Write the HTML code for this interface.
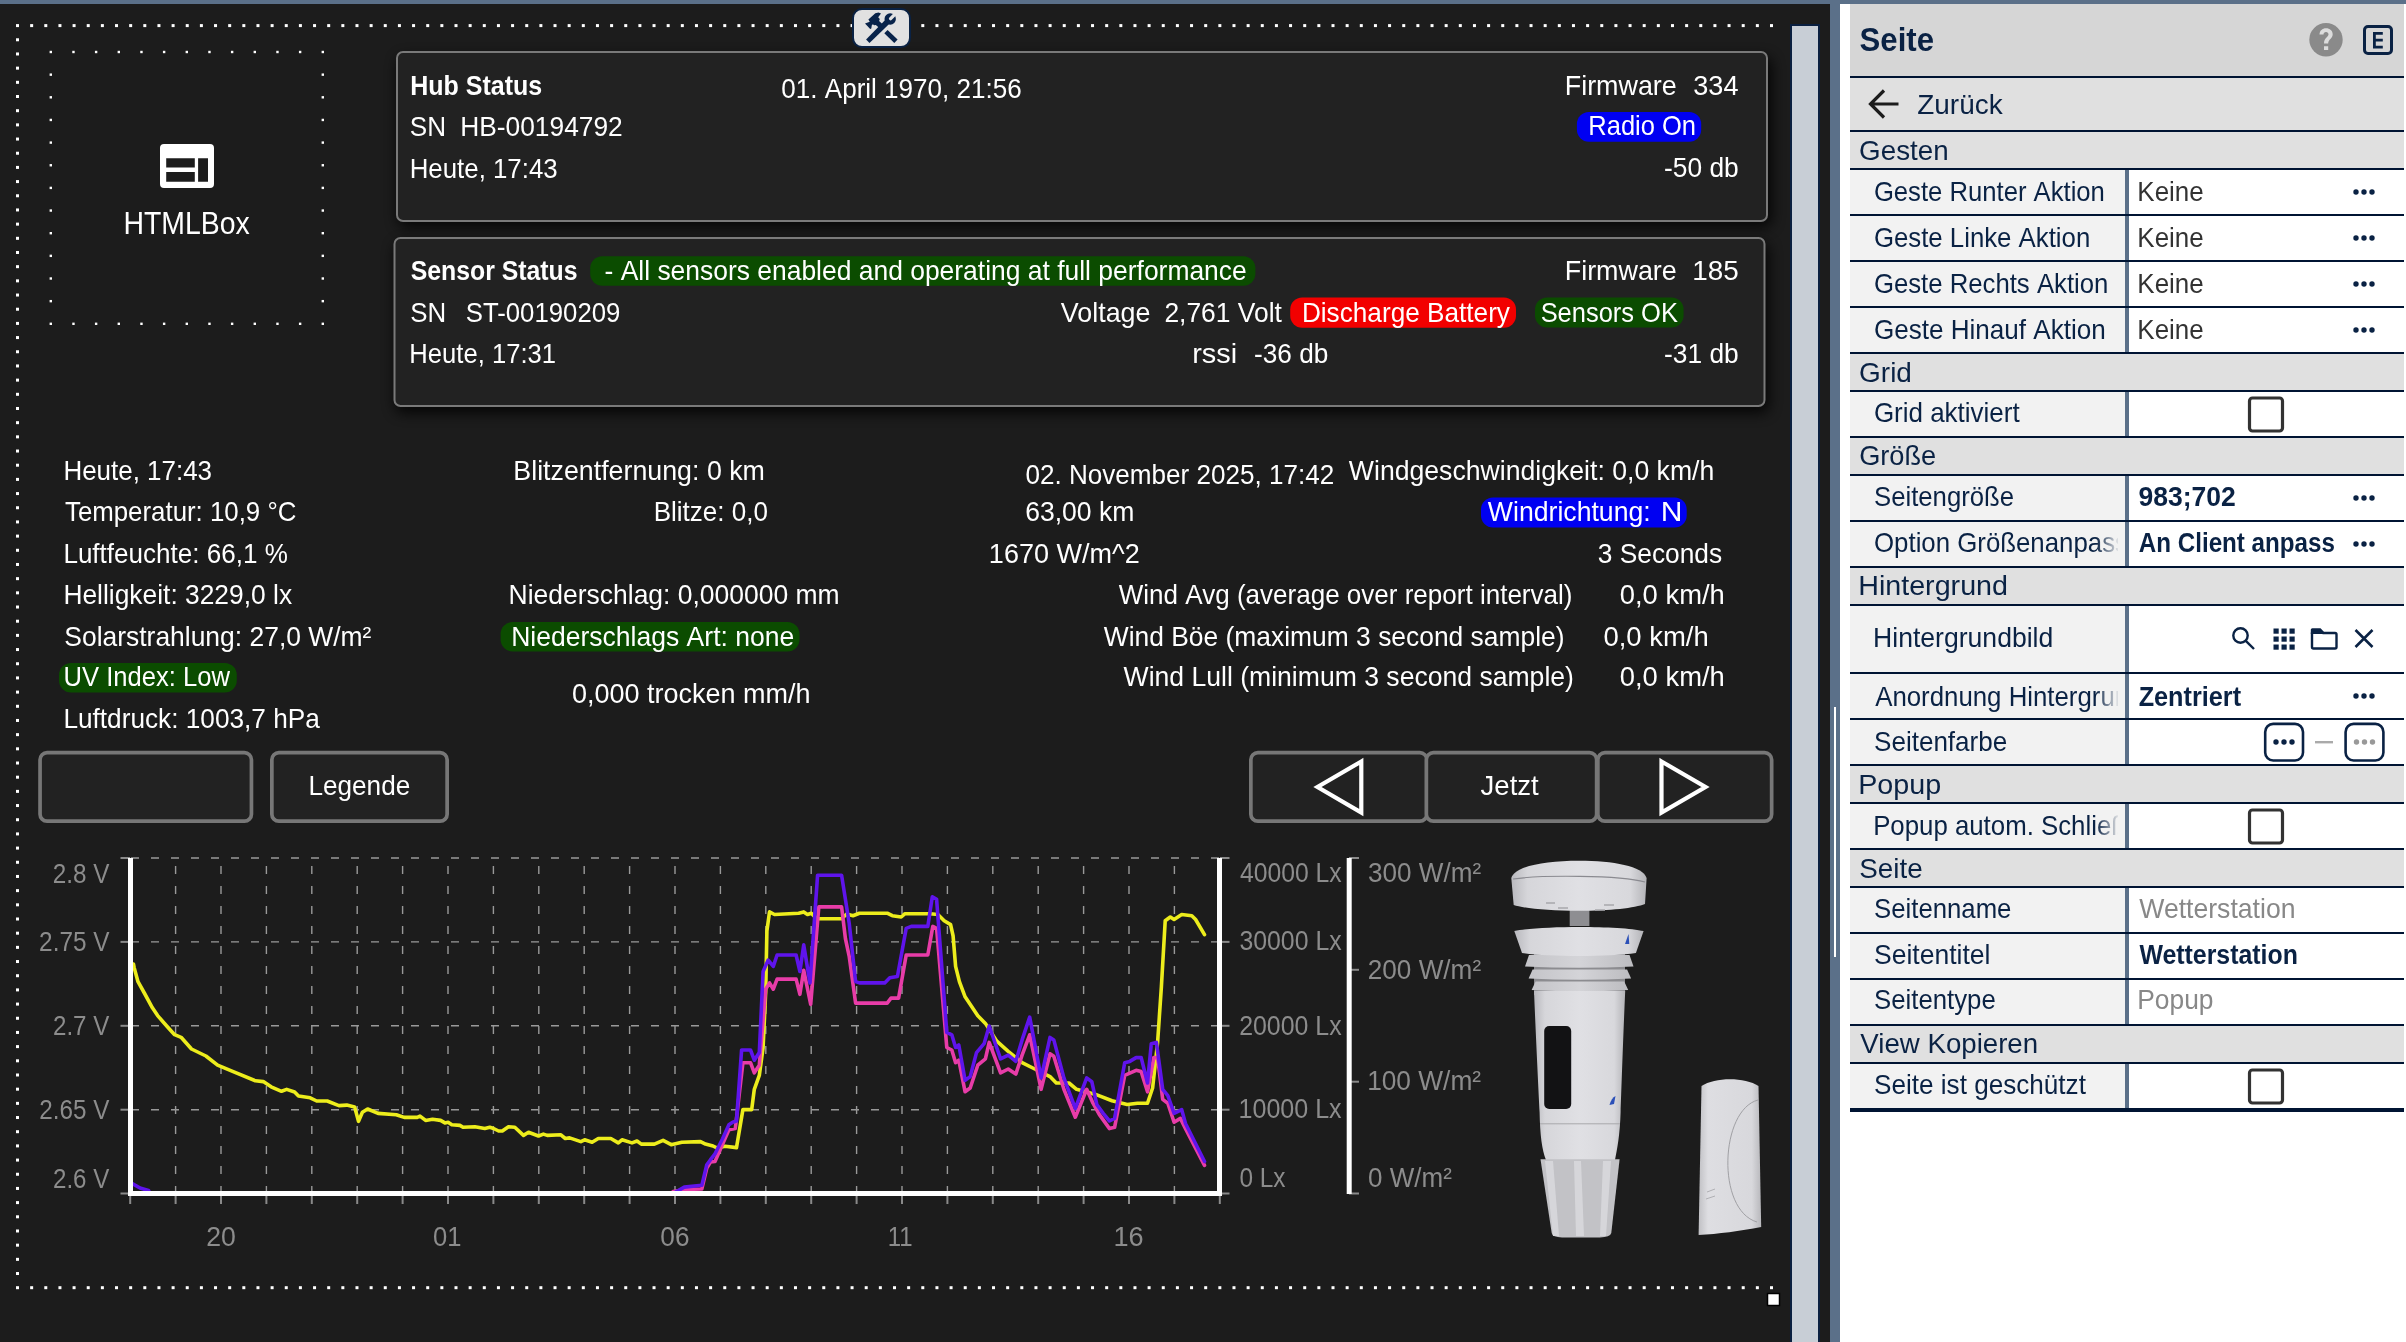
<!DOCTYPE html>
<html><head><meta charset="utf-8"><title>Wetterstation</title>
<style>
html,body{margin:0;padding:0;background:#1c1c1c;overflow:hidden;}
svg{display:block;font-family:"Liberation Sans",sans-serif;will-change:transform;}
</style></head><body>
<svg width="2406" height="1342" viewBox="0 0 2406 1342">
<rect x="0" y="0" width="2406" height="1342" fill="#ffffff"/>
<rect x="0" y="0" width="1830" height="1342" fill="#1c1c1c"/>
<rect x="0" y="0" width="2406" height="4" fill="#5b7089"/>
<rect x="1830" y="0" width="10" height="1342" fill="#5b7089"/>
<rect x="1834" y="707" width="2" height="250" fill="#ffffff"/>
<rect x="1790" y="24" width="30" height="1318" fill="#0a1f40"/>
<rect x="1792" y="26" width="26" height="1316" fill="#c8ced6"/>
<rect x="16.00" y="24.10" width="3" height="3" fill="#fff"/>
<rect x="16.00" y="1286.20" width="3" height="3" fill="#fff"/>
<rect x="30.15" y="24.10" width="3" height="3" fill="#fff"/>
<rect x="30.15" y="1286.20" width="3" height="3" fill="#fff"/>
<rect x="44.29" y="24.10" width="3" height="3" fill="#fff"/>
<rect x="44.29" y="1286.20" width="3" height="3" fill="#fff"/>
<rect x="58.44" y="24.10" width="3" height="3" fill="#fff"/>
<rect x="58.44" y="1286.20" width="3" height="3" fill="#fff"/>
<rect x="72.58" y="24.10" width="3" height="3" fill="#fff"/>
<rect x="72.58" y="1286.20" width="3" height="3" fill="#fff"/>
<rect x="86.73" y="24.10" width="3" height="3" fill="#fff"/>
<rect x="86.73" y="1286.20" width="3" height="3" fill="#fff"/>
<rect x="100.87" y="24.10" width="3" height="3" fill="#fff"/>
<rect x="100.87" y="1286.20" width="3" height="3" fill="#fff"/>
<rect x="115.02" y="24.10" width="3" height="3" fill="#fff"/>
<rect x="115.02" y="1286.20" width="3" height="3" fill="#fff"/>
<rect x="129.16" y="24.10" width="3" height="3" fill="#fff"/>
<rect x="129.16" y="1286.20" width="3" height="3" fill="#fff"/>
<rect x="143.31" y="24.10" width="3" height="3" fill="#fff"/>
<rect x="143.31" y="1286.20" width="3" height="3" fill="#fff"/>
<rect x="157.45" y="24.10" width="3" height="3" fill="#fff"/>
<rect x="157.45" y="1286.20" width="3" height="3" fill="#fff"/>
<rect x="171.60" y="24.10" width="3" height="3" fill="#fff"/>
<rect x="171.60" y="1286.20" width="3" height="3" fill="#fff"/>
<rect x="185.74" y="24.10" width="3" height="3" fill="#fff"/>
<rect x="185.74" y="1286.20" width="3" height="3" fill="#fff"/>
<rect x="199.89" y="24.10" width="3" height="3" fill="#fff"/>
<rect x="199.89" y="1286.20" width="3" height="3" fill="#fff"/>
<rect x="214.03" y="24.10" width="3" height="3" fill="#fff"/>
<rect x="214.03" y="1286.20" width="3" height="3" fill="#fff"/>
<rect x="228.18" y="24.10" width="3" height="3" fill="#fff"/>
<rect x="228.18" y="1286.20" width="3" height="3" fill="#fff"/>
<rect x="242.32" y="24.10" width="3" height="3" fill="#fff"/>
<rect x="242.32" y="1286.20" width="3" height="3" fill="#fff"/>
<rect x="256.47" y="24.10" width="3" height="3" fill="#fff"/>
<rect x="256.47" y="1286.20" width="3" height="3" fill="#fff"/>
<rect x="270.61" y="24.10" width="3" height="3" fill="#fff"/>
<rect x="270.61" y="1286.20" width="3" height="3" fill="#fff"/>
<rect x="284.76" y="24.10" width="3" height="3" fill="#fff"/>
<rect x="284.76" y="1286.20" width="3" height="3" fill="#fff"/>
<rect x="298.90" y="24.10" width="3" height="3" fill="#fff"/>
<rect x="298.90" y="1286.20" width="3" height="3" fill="#fff"/>
<rect x="313.05" y="24.10" width="3" height="3" fill="#fff"/>
<rect x="313.05" y="1286.20" width="3" height="3" fill="#fff"/>
<rect x="327.19" y="24.10" width="3" height="3" fill="#fff"/>
<rect x="327.19" y="1286.20" width="3" height="3" fill="#fff"/>
<rect x="341.34" y="24.10" width="3" height="3" fill="#fff"/>
<rect x="341.34" y="1286.20" width="3" height="3" fill="#fff"/>
<rect x="355.48" y="24.10" width="3" height="3" fill="#fff"/>
<rect x="355.48" y="1286.20" width="3" height="3" fill="#fff"/>
<rect x="369.63" y="24.10" width="3" height="3" fill="#fff"/>
<rect x="369.63" y="1286.20" width="3" height="3" fill="#fff"/>
<rect x="383.77" y="24.10" width="3" height="3" fill="#fff"/>
<rect x="383.77" y="1286.20" width="3" height="3" fill="#fff"/>
<rect x="397.92" y="24.10" width="3" height="3" fill="#fff"/>
<rect x="397.92" y="1286.20" width="3" height="3" fill="#fff"/>
<rect x="412.06" y="24.10" width="3" height="3" fill="#fff"/>
<rect x="412.06" y="1286.20" width="3" height="3" fill="#fff"/>
<rect x="426.21" y="24.10" width="3" height="3" fill="#fff"/>
<rect x="426.21" y="1286.20" width="3" height="3" fill="#fff"/>
<rect x="440.35" y="24.10" width="3" height="3" fill="#fff"/>
<rect x="440.35" y="1286.20" width="3" height="3" fill="#fff"/>
<rect x="454.50" y="24.10" width="3" height="3" fill="#fff"/>
<rect x="454.50" y="1286.20" width="3" height="3" fill="#fff"/>
<rect x="468.65" y="24.10" width="3" height="3" fill="#fff"/>
<rect x="468.65" y="1286.20" width="3" height="3" fill="#fff"/>
<rect x="482.79" y="24.10" width="3" height="3" fill="#fff"/>
<rect x="482.79" y="1286.20" width="3" height="3" fill="#fff"/>
<rect x="496.94" y="24.10" width="3" height="3" fill="#fff"/>
<rect x="496.94" y="1286.20" width="3" height="3" fill="#fff"/>
<rect x="511.08" y="24.10" width="3" height="3" fill="#fff"/>
<rect x="511.08" y="1286.20" width="3" height="3" fill="#fff"/>
<rect x="525.23" y="24.10" width="3" height="3" fill="#fff"/>
<rect x="525.23" y="1286.20" width="3" height="3" fill="#fff"/>
<rect x="539.37" y="24.10" width="3" height="3" fill="#fff"/>
<rect x="539.37" y="1286.20" width="3" height="3" fill="#fff"/>
<rect x="553.52" y="24.10" width="3" height="3" fill="#fff"/>
<rect x="553.52" y="1286.20" width="3" height="3" fill="#fff"/>
<rect x="567.66" y="24.10" width="3" height="3" fill="#fff"/>
<rect x="567.66" y="1286.20" width="3" height="3" fill="#fff"/>
<rect x="581.81" y="24.10" width="3" height="3" fill="#fff"/>
<rect x="581.81" y="1286.20" width="3" height="3" fill="#fff"/>
<rect x="595.95" y="24.10" width="3" height="3" fill="#fff"/>
<rect x="595.95" y="1286.20" width="3" height="3" fill="#fff"/>
<rect x="610.10" y="24.10" width="3" height="3" fill="#fff"/>
<rect x="610.10" y="1286.20" width="3" height="3" fill="#fff"/>
<rect x="624.24" y="24.10" width="3" height="3" fill="#fff"/>
<rect x="624.24" y="1286.20" width="3" height="3" fill="#fff"/>
<rect x="638.39" y="24.10" width="3" height="3" fill="#fff"/>
<rect x="638.39" y="1286.20" width="3" height="3" fill="#fff"/>
<rect x="652.53" y="24.10" width="3" height="3" fill="#fff"/>
<rect x="652.53" y="1286.20" width="3" height="3" fill="#fff"/>
<rect x="666.68" y="24.10" width="3" height="3" fill="#fff"/>
<rect x="666.68" y="1286.20" width="3" height="3" fill="#fff"/>
<rect x="680.82" y="24.10" width="3" height="3" fill="#fff"/>
<rect x="680.82" y="1286.20" width="3" height="3" fill="#fff"/>
<rect x="694.97" y="24.10" width="3" height="3" fill="#fff"/>
<rect x="694.97" y="1286.20" width="3" height="3" fill="#fff"/>
<rect x="709.11" y="24.10" width="3" height="3" fill="#fff"/>
<rect x="709.11" y="1286.20" width="3" height="3" fill="#fff"/>
<rect x="723.26" y="24.10" width="3" height="3" fill="#fff"/>
<rect x="723.26" y="1286.20" width="3" height="3" fill="#fff"/>
<rect x="737.40" y="24.10" width="3" height="3" fill="#fff"/>
<rect x="737.40" y="1286.20" width="3" height="3" fill="#fff"/>
<rect x="751.55" y="24.10" width="3" height="3" fill="#fff"/>
<rect x="751.55" y="1286.20" width="3" height="3" fill="#fff"/>
<rect x="765.69" y="24.10" width="3" height="3" fill="#fff"/>
<rect x="765.69" y="1286.20" width="3" height="3" fill="#fff"/>
<rect x="779.84" y="24.10" width="3" height="3" fill="#fff"/>
<rect x="779.84" y="1286.20" width="3" height="3" fill="#fff"/>
<rect x="793.98" y="24.10" width="3" height="3" fill="#fff"/>
<rect x="793.98" y="1286.20" width="3" height="3" fill="#fff"/>
<rect x="808.13" y="24.10" width="3" height="3" fill="#fff"/>
<rect x="808.13" y="1286.20" width="3" height="3" fill="#fff"/>
<rect x="822.27" y="24.10" width="3" height="3" fill="#fff"/>
<rect x="822.27" y="1286.20" width="3" height="3" fill="#fff"/>
<rect x="836.42" y="24.10" width="3" height="3" fill="#fff"/>
<rect x="836.42" y="1286.20" width="3" height="3" fill="#fff"/>
<rect x="850.56" y="24.10" width="3" height="3" fill="#fff"/>
<rect x="850.56" y="1286.20" width="3" height="3" fill="#fff"/>
<rect x="864.71" y="24.10" width="3" height="3" fill="#fff"/>
<rect x="864.71" y="1286.20" width="3" height="3" fill="#fff"/>
<rect x="878.85" y="24.10" width="3" height="3" fill="#fff"/>
<rect x="878.85" y="1286.20" width="3" height="3" fill="#fff"/>
<rect x="893.00" y="24.10" width="3" height="3" fill="#fff"/>
<rect x="893.00" y="1286.20" width="3" height="3" fill="#fff"/>
<rect x="907.15" y="24.10" width="3" height="3" fill="#fff"/>
<rect x="907.15" y="1286.20" width="3" height="3" fill="#fff"/>
<rect x="921.29" y="24.10" width="3" height="3" fill="#fff"/>
<rect x="921.29" y="1286.20" width="3" height="3" fill="#fff"/>
<rect x="935.44" y="24.10" width="3" height="3" fill="#fff"/>
<rect x="935.44" y="1286.20" width="3" height="3" fill="#fff"/>
<rect x="949.58" y="24.10" width="3" height="3" fill="#fff"/>
<rect x="949.58" y="1286.20" width="3" height="3" fill="#fff"/>
<rect x="963.73" y="24.10" width="3" height="3" fill="#fff"/>
<rect x="963.73" y="1286.20" width="3" height="3" fill="#fff"/>
<rect x="977.87" y="24.10" width="3" height="3" fill="#fff"/>
<rect x="977.87" y="1286.20" width="3" height="3" fill="#fff"/>
<rect x="992.02" y="24.10" width="3" height="3" fill="#fff"/>
<rect x="992.02" y="1286.20" width="3" height="3" fill="#fff"/>
<rect x="1006.16" y="24.10" width="3" height="3" fill="#fff"/>
<rect x="1006.16" y="1286.20" width="3" height="3" fill="#fff"/>
<rect x="1020.31" y="24.10" width="3" height="3" fill="#fff"/>
<rect x="1020.31" y="1286.20" width="3" height="3" fill="#fff"/>
<rect x="1034.45" y="24.10" width="3" height="3" fill="#fff"/>
<rect x="1034.45" y="1286.20" width="3" height="3" fill="#fff"/>
<rect x="1048.60" y="24.10" width="3" height="3" fill="#fff"/>
<rect x="1048.60" y="1286.20" width="3" height="3" fill="#fff"/>
<rect x="1062.74" y="24.10" width="3" height="3" fill="#fff"/>
<rect x="1062.74" y="1286.20" width="3" height="3" fill="#fff"/>
<rect x="1076.89" y="24.10" width="3" height="3" fill="#fff"/>
<rect x="1076.89" y="1286.20" width="3" height="3" fill="#fff"/>
<rect x="1091.03" y="24.10" width="3" height="3" fill="#fff"/>
<rect x="1091.03" y="1286.20" width="3" height="3" fill="#fff"/>
<rect x="1105.18" y="24.10" width="3" height="3" fill="#fff"/>
<rect x="1105.18" y="1286.20" width="3" height="3" fill="#fff"/>
<rect x="1119.32" y="24.10" width="3" height="3" fill="#fff"/>
<rect x="1119.32" y="1286.20" width="3" height="3" fill="#fff"/>
<rect x="1133.47" y="24.10" width="3" height="3" fill="#fff"/>
<rect x="1133.47" y="1286.20" width="3" height="3" fill="#fff"/>
<rect x="1147.61" y="24.10" width="3" height="3" fill="#fff"/>
<rect x="1147.61" y="1286.20" width="3" height="3" fill="#fff"/>
<rect x="1161.76" y="24.10" width="3" height="3" fill="#fff"/>
<rect x="1161.76" y="1286.20" width="3" height="3" fill="#fff"/>
<rect x="1175.90" y="24.10" width="3" height="3" fill="#fff"/>
<rect x="1175.90" y="1286.20" width="3" height="3" fill="#fff"/>
<rect x="1190.05" y="24.10" width="3" height="3" fill="#fff"/>
<rect x="1190.05" y="1286.20" width="3" height="3" fill="#fff"/>
<rect x="1204.19" y="24.10" width="3" height="3" fill="#fff"/>
<rect x="1204.19" y="1286.20" width="3" height="3" fill="#fff"/>
<rect x="1218.34" y="24.10" width="3" height="3" fill="#fff"/>
<rect x="1218.34" y="1286.20" width="3" height="3" fill="#fff"/>
<rect x="1232.48" y="24.10" width="3" height="3" fill="#fff"/>
<rect x="1232.48" y="1286.20" width="3" height="3" fill="#fff"/>
<rect x="1246.63" y="24.10" width="3" height="3" fill="#fff"/>
<rect x="1246.63" y="1286.20" width="3" height="3" fill="#fff"/>
<rect x="1260.77" y="24.10" width="3" height="3" fill="#fff"/>
<rect x="1260.77" y="1286.20" width="3" height="3" fill="#fff"/>
<rect x="1274.92" y="24.10" width="3" height="3" fill="#fff"/>
<rect x="1274.92" y="1286.20" width="3" height="3" fill="#fff"/>
<rect x="1289.06" y="24.10" width="3" height="3" fill="#fff"/>
<rect x="1289.06" y="1286.20" width="3" height="3" fill="#fff"/>
<rect x="1303.21" y="24.10" width="3" height="3" fill="#fff"/>
<rect x="1303.21" y="1286.20" width="3" height="3" fill="#fff"/>
<rect x="1317.35" y="24.10" width="3" height="3" fill="#fff"/>
<rect x="1317.35" y="1286.20" width="3" height="3" fill="#fff"/>
<rect x="1331.50" y="24.10" width="3" height="3" fill="#fff"/>
<rect x="1331.50" y="1286.20" width="3" height="3" fill="#fff"/>
<rect x="1345.65" y="24.10" width="3" height="3" fill="#fff"/>
<rect x="1345.65" y="1286.20" width="3" height="3" fill="#fff"/>
<rect x="1359.79" y="24.10" width="3" height="3" fill="#fff"/>
<rect x="1359.79" y="1286.20" width="3" height="3" fill="#fff"/>
<rect x="1373.94" y="24.10" width="3" height="3" fill="#fff"/>
<rect x="1373.94" y="1286.20" width="3" height="3" fill="#fff"/>
<rect x="1388.08" y="24.10" width="3" height="3" fill="#fff"/>
<rect x="1388.08" y="1286.20" width="3" height="3" fill="#fff"/>
<rect x="1402.23" y="24.10" width="3" height="3" fill="#fff"/>
<rect x="1402.23" y="1286.20" width="3" height="3" fill="#fff"/>
<rect x="1416.37" y="24.10" width="3" height="3" fill="#fff"/>
<rect x="1416.37" y="1286.20" width="3" height="3" fill="#fff"/>
<rect x="1430.52" y="24.10" width="3" height="3" fill="#fff"/>
<rect x="1430.52" y="1286.20" width="3" height="3" fill="#fff"/>
<rect x="1444.66" y="24.10" width="3" height="3" fill="#fff"/>
<rect x="1444.66" y="1286.20" width="3" height="3" fill="#fff"/>
<rect x="1458.81" y="24.10" width="3" height="3" fill="#fff"/>
<rect x="1458.81" y="1286.20" width="3" height="3" fill="#fff"/>
<rect x="1472.95" y="24.10" width="3" height="3" fill="#fff"/>
<rect x="1472.95" y="1286.20" width="3" height="3" fill="#fff"/>
<rect x="1487.10" y="24.10" width="3" height="3" fill="#fff"/>
<rect x="1487.10" y="1286.20" width="3" height="3" fill="#fff"/>
<rect x="1501.24" y="24.10" width="3" height="3" fill="#fff"/>
<rect x="1501.24" y="1286.20" width="3" height="3" fill="#fff"/>
<rect x="1515.39" y="24.10" width="3" height="3" fill="#fff"/>
<rect x="1515.39" y="1286.20" width="3" height="3" fill="#fff"/>
<rect x="1529.53" y="24.10" width="3" height="3" fill="#fff"/>
<rect x="1529.53" y="1286.20" width="3" height="3" fill="#fff"/>
<rect x="1543.68" y="24.10" width="3" height="3" fill="#fff"/>
<rect x="1543.68" y="1286.20" width="3" height="3" fill="#fff"/>
<rect x="1557.82" y="24.10" width="3" height="3" fill="#fff"/>
<rect x="1557.82" y="1286.20" width="3" height="3" fill="#fff"/>
<rect x="1571.97" y="24.10" width="3" height="3" fill="#fff"/>
<rect x="1571.97" y="1286.20" width="3" height="3" fill="#fff"/>
<rect x="1586.11" y="24.10" width="3" height="3" fill="#fff"/>
<rect x="1586.11" y="1286.20" width="3" height="3" fill="#fff"/>
<rect x="1600.26" y="24.10" width="3" height="3" fill="#fff"/>
<rect x="1600.26" y="1286.20" width="3" height="3" fill="#fff"/>
<rect x="1614.40" y="24.10" width="3" height="3" fill="#fff"/>
<rect x="1614.40" y="1286.20" width="3" height="3" fill="#fff"/>
<rect x="1628.55" y="24.10" width="3" height="3" fill="#fff"/>
<rect x="1628.55" y="1286.20" width="3" height="3" fill="#fff"/>
<rect x="1642.69" y="24.10" width="3" height="3" fill="#fff"/>
<rect x="1642.69" y="1286.20" width="3" height="3" fill="#fff"/>
<rect x="1656.84" y="24.10" width="3" height="3" fill="#fff"/>
<rect x="1656.84" y="1286.20" width="3" height="3" fill="#fff"/>
<rect x="1670.98" y="24.10" width="3" height="3" fill="#fff"/>
<rect x="1670.98" y="1286.20" width="3" height="3" fill="#fff"/>
<rect x="1685.13" y="24.10" width="3" height="3" fill="#fff"/>
<rect x="1685.13" y="1286.20" width="3" height="3" fill="#fff"/>
<rect x="1699.27" y="24.10" width="3" height="3" fill="#fff"/>
<rect x="1699.27" y="1286.20" width="3" height="3" fill="#fff"/>
<rect x="1713.42" y="24.10" width="3" height="3" fill="#fff"/>
<rect x="1713.42" y="1286.20" width="3" height="3" fill="#fff"/>
<rect x="1727.56" y="24.10" width="3" height="3" fill="#fff"/>
<rect x="1727.56" y="1286.20" width="3" height="3" fill="#fff"/>
<rect x="1741.71" y="24.10" width="3" height="3" fill="#fff"/>
<rect x="1741.71" y="1286.20" width="3" height="3" fill="#fff"/>
<rect x="1755.85" y="24.10" width="3" height="3" fill="#fff"/>
<rect x="1755.85" y="1286.20" width="3" height="3" fill="#fff"/>
<rect x="1770.00" y="24.10" width="3" height="3" fill="#fff"/>
<rect x="1770.00" y="1286.20" width="3" height="3" fill="#fff"/>
<rect x="16.00" y="38.28" width="3" height="3" fill="#fff"/>
<rect x="16.00" y="52.46" width="3" height="3" fill="#fff"/>
<rect x="16.00" y="66.64" width="3" height="3" fill="#fff"/>
<rect x="16.00" y="80.82" width="3" height="3" fill="#fff"/>
<rect x="16.00" y="95.00" width="3" height="3" fill="#fff"/>
<rect x="16.00" y="109.19" width="3" height="3" fill="#fff"/>
<rect x="16.00" y="123.37" width="3" height="3" fill="#fff"/>
<rect x="16.00" y="137.55" width="3" height="3" fill="#fff"/>
<rect x="16.00" y="151.73" width="3" height="3" fill="#fff"/>
<rect x="16.00" y="165.91" width="3" height="3" fill="#fff"/>
<rect x="16.00" y="180.09" width="3" height="3" fill="#fff"/>
<rect x="16.00" y="194.27" width="3" height="3" fill="#fff"/>
<rect x="16.00" y="208.45" width="3" height="3" fill="#fff"/>
<rect x="16.00" y="222.63" width="3" height="3" fill="#fff"/>
<rect x="16.00" y="236.81" width="3" height="3" fill="#fff"/>
<rect x="16.00" y="250.99" width="3" height="3" fill="#fff"/>
<rect x="16.00" y="265.18" width="3" height="3" fill="#fff"/>
<rect x="16.00" y="279.36" width="3" height="3" fill="#fff"/>
<rect x="16.00" y="293.54" width="3" height="3" fill="#fff"/>
<rect x="16.00" y="307.72" width="3" height="3" fill="#fff"/>
<rect x="16.00" y="321.90" width="3" height="3" fill="#fff"/>
<rect x="16.00" y="336.08" width="3" height="3" fill="#fff"/>
<rect x="16.00" y="350.26" width="3" height="3" fill="#fff"/>
<rect x="16.00" y="364.44" width="3" height="3" fill="#fff"/>
<rect x="16.00" y="378.62" width="3" height="3" fill="#fff"/>
<rect x="16.00" y="392.80" width="3" height="3" fill="#fff"/>
<rect x="16.00" y="406.98" width="3" height="3" fill="#fff"/>
<rect x="16.00" y="421.17" width="3" height="3" fill="#fff"/>
<rect x="16.00" y="435.35" width="3" height="3" fill="#fff"/>
<rect x="16.00" y="449.53" width="3" height="3" fill="#fff"/>
<rect x="16.00" y="463.71" width="3" height="3" fill="#fff"/>
<rect x="16.00" y="477.89" width="3" height="3" fill="#fff"/>
<rect x="16.00" y="492.07" width="3" height="3" fill="#fff"/>
<rect x="16.00" y="506.25" width="3" height="3" fill="#fff"/>
<rect x="16.00" y="520.43" width="3" height="3" fill="#fff"/>
<rect x="16.00" y="534.61" width="3" height="3" fill="#fff"/>
<rect x="16.00" y="548.79" width="3" height="3" fill="#fff"/>
<rect x="16.00" y="562.97" width="3" height="3" fill="#fff"/>
<rect x="16.00" y="577.16" width="3" height="3" fill="#fff"/>
<rect x="16.00" y="591.34" width="3" height="3" fill="#fff"/>
<rect x="16.00" y="605.52" width="3" height="3" fill="#fff"/>
<rect x="16.00" y="619.70" width="3" height="3" fill="#fff"/>
<rect x="16.00" y="633.88" width="3" height="3" fill="#fff"/>
<rect x="16.00" y="648.06" width="3" height="3" fill="#fff"/>
<rect x="16.00" y="662.24" width="3" height="3" fill="#fff"/>
<rect x="16.00" y="676.42" width="3" height="3" fill="#fff"/>
<rect x="16.00" y="690.60" width="3" height="3" fill="#fff"/>
<rect x="16.00" y="704.78" width="3" height="3" fill="#fff"/>
<rect x="16.00" y="718.96" width="3" height="3" fill="#fff"/>
<rect x="16.00" y="733.14" width="3" height="3" fill="#fff"/>
<rect x="16.00" y="747.33" width="3" height="3" fill="#fff"/>
<rect x="16.00" y="761.51" width="3" height="3" fill="#fff"/>
<rect x="16.00" y="775.69" width="3" height="3" fill="#fff"/>
<rect x="16.00" y="789.87" width="3" height="3" fill="#fff"/>
<rect x="16.00" y="804.05" width="3" height="3" fill="#fff"/>
<rect x="16.00" y="818.23" width="3" height="3" fill="#fff"/>
<rect x="16.00" y="832.41" width="3" height="3" fill="#fff"/>
<rect x="16.00" y="846.59" width="3" height="3" fill="#fff"/>
<rect x="16.00" y="860.77" width="3" height="3" fill="#fff"/>
<rect x="16.00" y="874.95" width="3" height="3" fill="#fff"/>
<rect x="16.00" y="889.13" width="3" height="3" fill="#fff"/>
<rect x="16.00" y="903.32" width="3" height="3" fill="#fff"/>
<rect x="16.00" y="917.50" width="3" height="3" fill="#fff"/>
<rect x="16.00" y="931.68" width="3" height="3" fill="#fff"/>
<rect x="16.00" y="945.86" width="3" height="3" fill="#fff"/>
<rect x="16.00" y="960.04" width="3" height="3" fill="#fff"/>
<rect x="16.00" y="974.22" width="3" height="3" fill="#fff"/>
<rect x="16.00" y="988.40" width="3" height="3" fill="#fff"/>
<rect x="16.00" y="1002.58" width="3" height="3" fill="#fff"/>
<rect x="16.00" y="1016.76" width="3" height="3" fill="#fff"/>
<rect x="16.00" y="1030.94" width="3" height="3" fill="#fff"/>
<rect x="16.00" y="1045.12" width="3" height="3" fill="#fff"/>
<rect x="16.00" y="1059.31" width="3" height="3" fill="#fff"/>
<rect x="16.00" y="1073.49" width="3" height="3" fill="#fff"/>
<rect x="16.00" y="1087.67" width="3" height="3" fill="#fff"/>
<rect x="16.00" y="1101.85" width="3" height="3" fill="#fff"/>
<rect x="16.00" y="1116.03" width="3" height="3" fill="#fff"/>
<rect x="16.00" y="1130.21" width="3" height="3" fill="#fff"/>
<rect x="16.00" y="1144.39" width="3" height="3" fill="#fff"/>
<rect x="16.00" y="1158.57" width="3" height="3" fill="#fff"/>
<rect x="16.00" y="1172.75" width="3" height="3" fill="#fff"/>
<rect x="16.00" y="1186.93" width="3" height="3" fill="#fff"/>
<rect x="16.00" y="1201.11" width="3" height="3" fill="#fff"/>
<rect x="16.00" y="1215.30" width="3" height="3" fill="#fff"/>
<rect x="16.00" y="1229.48" width="3" height="3" fill="#fff"/>
<rect x="16.00" y="1243.66" width="3" height="3" fill="#fff"/>
<rect x="16.00" y="1257.84" width="3" height="3" fill="#fff"/>
<rect x="16.00" y="1272.02" width="3" height="3" fill="#fff"/>
<rect x="1767.5" y="1293.5" width="12" height="12" fill="#fff" stroke="#000" stroke-width="1.5"/>
<rect x="49.60" y="50.80" width="2.4" height="2.4" fill="#fff"/>
<rect x="49.60" y="322.60" width="2.4" height="2.4" fill="#fff"/>
<rect x="72.27" y="50.80" width="2.4" height="2.4" fill="#fff"/>
<rect x="72.27" y="322.60" width="2.4" height="2.4" fill="#fff"/>
<rect x="94.93" y="50.80" width="2.4" height="2.4" fill="#fff"/>
<rect x="94.93" y="322.60" width="2.4" height="2.4" fill="#fff"/>
<rect x="117.60" y="50.80" width="2.4" height="2.4" fill="#fff"/>
<rect x="117.60" y="322.60" width="2.4" height="2.4" fill="#fff"/>
<rect x="140.27" y="50.80" width="2.4" height="2.4" fill="#fff"/>
<rect x="140.27" y="322.60" width="2.4" height="2.4" fill="#fff"/>
<rect x="162.93" y="50.80" width="2.4" height="2.4" fill="#fff"/>
<rect x="162.93" y="322.60" width="2.4" height="2.4" fill="#fff"/>
<rect x="185.60" y="50.80" width="2.4" height="2.4" fill="#fff"/>
<rect x="185.60" y="322.60" width="2.4" height="2.4" fill="#fff"/>
<rect x="208.27" y="50.80" width="2.4" height="2.4" fill="#fff"/>
<rect x="208.27" y="322.60" width="2.4" height="2.4" fill="#fff"/>
<rect x="230.93" y="50.80" width="2.4" height="2.4" fill="#fff"/>
<rect x="230.93" y="322.60" width="2.4" height="2.4" fill="#fff"/>
<rect x="253.60" y="50.80" width="2.4" height="2.4" fill="#fff"/>
<rect x="253.60" y="322.60" width="2.4" height="2.4" fill="#fff"/>
<rect x="276.27" y="50.80" width="2.4" height="2.4" fill="#fff"/>
<rect x="276.27" y="322.60" width="2.4" height="2.4" fill="#fff"/>
<rect x="298.93" y="50.80" width="2.4" height="2.4" fill="#fff"/>
<rect x="298.93" y="322.60" width="2.4" height="2.4" fill="#fff"/>
<rect x="321.60" y="50.80" width="2.4" height="2.4" fill="#fff"/>
<rect x="321.60" y="322.60" width="2.4" height="2.4" fill="#fff"/>
<rect x="49.60" y="73.45" width="2.4" height="2.4" fill="#fff"/>
<rect x="321.60" y="73.45" width="2.4" height="2.4" fill="#fff"/>
<rect x="49.60" y="96.10" width="2.4" height="2.4" fill="#fff"/>
<rect x="321.60" y="96.10" width="2.4" height="2.4" fill="#fff"/>
<rect x="49.60" y="118.75" width="2.4" height="2.4" fill="#fff"/>
<rect x="321.60" y="118.75" width="2.4" height="2.4" fill="#fff"/>
<rect x="49.60" y="141.40" width="2.4" height="2.4" fill="#fff"/>
<rect x="321.60" y="141.40" width="2.4" height="2.4" fill="#fff"/>
<rect x="49.60" y="164.05" width="2.4" height="2.4" fill="#fff"/>
<rect x="321.60" y="164.05" width="2.4" height="2.4" fill="#fff"/>
<rect x="49.60" y="186.70" width="2.4" height="2.4" fill="#fff"/>
<rect x="321.60" y="186.70" width="2.4" height="2.4" fill="#fff"/>
<rect x="49.60" y="209.35" width="2.4" height="2.4" fill="#fff"/>
<rect x="321.60" y="209.35" width="2.4" height="2.4" fill="#fff"/>
<rect x="49.60" y="232.00" width="2.4" height="2.4" fill="#fff"/>
<rect x="321.60" y="232.00" width="2.4" height="2.4" fill="#fff"/>
<rect x="49.60" y="254.65" width="2.4" height="2.4" fill="#fff"/>
<rect x="321.60" y="254.65" width="2.4" height="2.4" fill="#fff"/>
<rect x="49.60" y="277.30" width="2.4" height="2.4" fill="#fff"/>
<rect x="321.60" y="277.30" width="2.4" height="2.4" fill="#fff"/>
<rect x="49.60" y="299.95" width="2.4" height="2.4" fill="#fff"/>
<rect x="321.60" y="299.95" width="2.4" height="2.4" fill="#fff"/>
<path fill="#fff" fill-rule="evenodd" d="M164,144 h46 a4,4 0 0 1 4,4 v36 a4,4 0 0 1 -4,4 h-46 a4,4 0 0 1 -4,-4 v-36 a4,4 0 0 1 4,-4 z M166.2,158.2 h28.6 v9.4 h-28.6 z M166.2,172 h28.6 v9.7 h-28.6 z M198.1,158.2 h9.9 v23.5 h-9.9 z"/>
<text x="123.43" y="234.00" font-size="30.90" textLength="126.37" lengthAdjust="spacingAndGlyphs" fill="#fff" style="" >HTMLBox</text>
<defs><filter id="sh" x="-5%" y="-20%" width="110%" height="150%"><feGaussianBlur stdDeviation="7"/></filter></defs>
<rect x="398" y="57" width="1374" height="170" rx="8" fill="#000" opacity="0.8" filter="url(#sh)"/>
<rect x="395" y="243" width="1374" height="170" rx="8" fill="#000" opacity="0.8" filter="url(#sh)"/>
<rect x="397" y="52" width="1370" height="169" rx="6" fill="#222" stroke="#7a7a7a" stroke-width="2"/>
<rect x="394.5" y="238" width="1370" height="168" rx="6" fill="#222" stroke="#7a7a7a" stroke-width="2"/>
<text x="410.17" y="94.90" font-size="27.20" textLength="132.00" lengthAdjust="spacingAndGlyphs" fill="#fff" style="font-weight:bold;" >Hub&#160;Status</text>
<text x="781.35" y="98.00" font-size="27.20" textLength="240.37" lengthAdjust="spacingAndGlyphs" fill="#fff" style="" >01.&#160;April&#160;1970,&#160;21:56</text>
<text x="1564.75" y="94.60" font-size="27.20" textLength="112.01" lengthAdjust="spacingAndGlyphs" fill="#fff" style="" >Firmware</text>
<text x="1693.32" y="94.60" font-size="27.20" textLength="45.19" lengthAdjust="spacingAndGlyphs" fill="#fff" style="" >334</text>
<text x="409.82" y="136.30" font-size="27.20" textLength="36.27" lengthAdjust="spacingAndGlyphs" fill="#fff" style="" >SN</text>
<text x="460.19" y="136.30" font-size="27.20" textLength="162.57" lengthAdjust="spacingAndGlyphs" fill="#fff" style="" >HB-00194792</text>
<rect x="1576.9" y="112.1" width="124.3" height="29.7" rx="12" fill="#0000f2"/>
<text x="1588.36" y="135.00" font-size="27.20" textLength="107.69" lengthAdjust="spacingAndGlyphs" fill="#fff" style="" >Radio&#160;On</text>
<text x="409.73" y="178.20" font-size="27.20" textLength="147.94" lengthAdjust="spacingAndGlyphs" fill="#fff" style="" >Heute,&#160;17:43</text>
<text x="1664.02" y="177.00" font-size="27.20" textLength="74.65" lengthAdjust="spacingAndGlyphs" fill="#fff" style="" >-50&#160;db</text>
<text x="410.66" y="279.50" font-size="27.20" textLength="166.92" lengthAdjust="spacingAndGlyphs" fill="#fff" style="font-weight:bold;" >Sensor&#160;Status</text>
<rect x="590.2" y="256.2" width="665.2" height="29.5" rx="12" fill="#0b4c00"/>
<text x="604.51" y="280.00" font-size="27.20" textLength="642.25" lengthAdjust="spacingAndGlyphs" fill="#fff" style="" >-&#160;All&#160;sensors&#160;enabled&#160;and&#160;operating&#160;at&#160;full&#160;performance</text>
<text x="1564.75" y="279.60" font-size="27.20" textLength="112.01" lengthAdjust="spacingAndGlyphs" fill="#fff" style="" >Firmware</text>
<text x="1692.31" y="279.60" font-size="27.20" textLength="46.50" lengthAdjust="spacingAndGlyphs" fill="#fff" style="" >185</text>
<text x="410.24" y="322.10" font-size="27.20" textLength="35.94" lengthAdjust="spacingAndGlyphs" fill="#fff" style="" >SN</text>
<text x="465.74" y="322.10" font-size="27.20" textLength="154.62" lengthAdjust="spacingAndGlyphs" fill="#fff" style="" >ST-00190209</text>
<text x="1060.87" y="321.70" font-size="27.20" textLength="89.58" lengthAdjust="spacingAndGlyphs" fill="#fff" style="" >Voltage</text>
<text x="1164.38" y="321.70" font-size="27.20" textLength="117.54" lengthAdjust="spacingAndGlyphs" fill="#fff" style="" >2,761&#160;Volt</text>
<rect x="1290.2" y="297.5" width="225.8" height="30.2" rx="12" fill="#f20000"/>
<text x="1301.91" y="321.50" font-size="27.20" textLength="208.04" lengthAdjust="spacingAndGlyphs" fill="#fff" style="" >Discharge&#160;Battery</text>
<rect x="1535" y="297.4" width="148.6" height="30.2" rx="12" fill="#0b4c00"/>
<text x="1540.65" y="321.50" font-size="27.20" textLength="137.23" lengthAdjust="spacingAndGlyphs" fill="#fff" style="" >Sensors&#160;OK</text>
<text x="409.35" y="363.20" font-size="27.20" textLength="146.64" lengthAdjust="spacingAndGlyphs" fill="#fff" style="" >Heute,&#160;17:31</text>
<text x="1192.22" y="363.00" font-size="27.20" textLength="44.97" lengthAdjust="spacingAndGlyphs" fill="#fff" style="" >rssi</text>
<text x="1254.02" y="363.00" font-size="27.20" textLength="74.34" lengthAdjust="spacingAndGlyphs" fill="#fff" style="" >-36&#160;db</text>
<text x="1664.02" y="363.00" font-size="27.20" textLength="74.65" lengthAdjust="spacingAndGlyphs" fill="#fff" style="" >-31&#160;db</text>
<text x="63.42" y="479.90" font-size="27.20" textLength="148.66" lengthAdjust="spacingAndGlyphs" fill="#fff" style="" >Heute,&#160;17:43</text>
<text x="64.98" y="521.00" font-size="27.20" textLength="231.41" lengthAdjust="spacingAndGlyphs" fill="#fff" style="" >Temperatur:&#160;10,9&#160;°C</text>
<text x="63.42" y="562.90" font-size="27.20" textLength="224.42" lengthAdjust="spacingAndGlyphs" fill="#fff" style="" >Luftfeuchte:&#160;66,1&#160;%</text>
<text x="63.39" y="604.00" font-size="27.20" textLength="228.71" lengthAdjust="spacingAndGlyphs" fill="#fff" style="" >Helligkeit:&#160;3229,0&#160;lx</text>
<text x="64.31" y="646.00" font-size="27.20" textLength="307.11" lengthAdjust="spacingAndGlyphs" fill="#fff" style="" >Solarstrahlung:&#160;27,0&#160;W/m²</text>
<rect x="59" y="663" width="177.8" height="29.4" rx="12" fill="#0b4c00"/>
<text x="63.58" y="686.40" font-size="27.20" textLength="166.38" lengthAdjust="spacingAndGlyphs" fill="#fff" style="" >UV&#160;Index:&#160;Low</text>
<text x="63.40" y="727.50" font-size="27.20" textLength="256.49" lengthAdjust="spacingAndGlyphs" fill="#fff" style="" >Luftdruck:&#160;1003,7&#160;hPa</text>
<text x="513.36" y="479.90" font-size="27.20" textLength="251.55" lengthAdjust="spacingAndGlyphs" fill="#fff" style="" >Blitzentfernung:&#160;0&#160;km</text>
<text x="653.72" y="521.00" font-size="27.20" textLength="114.22" lengthAdjust="spacingAndGlyphs" fill="#fff" style="" >Blitze:&#160;0,0</text>
<text x="508.58" y="604.00" font-size="27.20" textLength="331.06" lengthAdjust="spacingAndGlyphs" fill="#fff" style="" >Niederschlag:&#160;0,000000&#160;mm</text>
<rect x="500.6" y="622" width="298.9" height="29.4" rx="12" fill="#0b4c00"/>
<text x="511.17" y="646.00" font-size="27.20" textLength="283.10" lengthAdjust="spacingAndGlyphs" fill="#fff" style="" >Niederschlags&#160;Art:&#160;none</text>
<text x="571.92" y="702.50" font-size="27.20" textLength="238.71" lengthAdjust="spacingAndGlyphs" fill="#fff" style="" >0,000&#160;trocken&#160;mm/h</text>
<text x="1025.46" y="484.30" font-size="27.20" textLength="308.69" lengthAdjust="spacingAndGlyphs" fill="#fff" style="" >02.&#160;November&#160;2025,&#160;17:42</text>
<text x="1025.17" y="521.00" font-size="27.20" textLength="109.21" lengthAdjust="spacingAndGlyphs" fill="#fff" style="" >63,00&#160;km</text>
<text x="988.87" y="562.90" font-size="27.20" textLength="150.85" lengthAdjust="spacingAndGlyphs" fill="#fff" style="" >1670&#160;W/m^2</text>
<text x="1348.87" y="479.90" font-size="27.20" textLength="365.43" lengthAdjust="spacingAndGlyphs" fill="#fff" style="" >Windgeschwindigkeit:&#160;0,0&#160;km/h</text>
<rect x="1481" y="497.4" width="205.7" height="30" rx="12" fill="#0000f2"/>
<text x="1487.87" y="521.00" font-size="27.20" textLength="162.83" lengthAdjust="spacingAndGlyphs" fill="#fff" style="" >Windrichtung:</text>
<text x="1660.80" y="521.00" font-size="27.20" textLength="21.67" lengthAdjust="spacingAndGlyphs" fill="#fff" style="" >N</text>
<text x="1597.75" y="562.90" font-size="27.20" textLength="124.39" lengthAdjust="spacingAndGlyphs" fill="#fff" style="" >3&#160;Seconds</text>
<text x="1118.77" y="604.00" font-size="27.20" textLength="453.70" lengthAdjust="spacingAndGlyphs" fill="#fff" style="" >Wind&#160;Avg&#160;(average&#160;over&#160;report&#160;interval)</text>
<text x="1619.81" y="604.00" font-size="27.20" textLength="104.97" lengthAdjust="spacingAndGlyphs" fill="#fff" style="" >0,0&#160;km/h</text>
<text x="1103.77" y="646.00" font-size="27.20" textLength="460.75" lengthAdjust="spacingAndGlyphs" fill="#fff" style="" >Wind&#160;Böe&#160;(maximum&#160;3&#160;second&#160;sample)</text>
<text x="1603.40" y="646.00" font-size="27.20" textLength="105.39" lengthAdjust="spacingAndGlyphs" fill="#fff" style="" >0,0&#160;km/h</text>
<text x="1123.57" y="686.40" font-size="27.20" textLength="450.35" lengthAdjust="spacingAndGlyphs" fill="#fff" style="" >Wind&#160;Lull&#160;(minimum&#160;3&#160;second&#160;sample)</text>
<text x="1619.81" y="686.40" font-size="27.20" textLength="104.97" lengthAdjust="spacingAndGlyphs" fill="#fff" style="" >0,0&#160;km/h</text>
<rect x="40.05" y="752.65" width="211.40" height="68.50" rx="7" fill="#222" stroke="#777" stroke-width="3.7"/>
<rect x="271.85" y="752.65" width="175.30" height="68.50" rx="7" fill="#222" stroke="#777" stroke-width="3.7"/>
<rect x="1250.85" y="752.65" width="176.00" height="68.50" rx="7" fill="#222" stroke="#777" stroke-width="3.7"/>
<rect x="1597.85" y="752.65" width="173.80" height="68.50" rx="7" fill="#222" stroke="#777" stroke-width="3.7"/>
<rect x="1426.35" y="752.65" width="170.30" height="68.50" rx="7" fill="#222" stroke="#777" stroke-width="3.7"/>
<text x="308.41" y="795.20" font-size="27.20" textLength="101.85" lengthAdjust="spacingAndGlyphs" fill="#fff" style="" >Legende</text>
<text x="1480.59" y="795.20" font-size="27.20" textLength="58.20" lengthAdjust="spacingAndGlyphs" fill="#fff" style="" >Jetzt</text>
<path d="M1361.3,761.5 L1317.5,787 L1361.3,812.5 Z" fill="none" stroke="#fff" stroke-width="4.2" stroke-linejoin="miter"/>
<path d="M1661.5,761.5 L1705.5,787 L1661.5,812.5 Z" fill="none" stroke="#fff" stroke-width="4.2" stroke-linejoin="miter"/>
<rect x="853" y="9" width="57" height="38" rx="9" fill="#e1e1e1" stroke="#0a2244" stroke-width="2"/>
<g fill="#08234a"><path d="M866.1,39.4 L869.5,42.9 L888.9,24.3 L885.4,19.7 Z"/><circle cx="890.2" cy="19.0" r="5.7"/><path d="M868.4,19.6 L875.3,13.2 L878.5,12.6 L881,13.6 L878.2,17.3 L879.8,19.1 L879.1,20.9 L882.6,24.2 L878.8,27.6 L875.8,24.9 L874.2,25.3 L872.8,24.3 L871.8,25.2 L871.3,28.6 L870.2,29 L865,23.4 L869.8,21.8 Z"/><path d="M884.3,33.3 L887.6,30.1 L897.6,39.4 L894.3,42.9 Z"/></g>
<path d="M890.6,18.6 L896.6,12.6" stroke="#e1e1e1" stroke-width="3.4" stroke-linecap="round"/>
<g stroke="#999" stroke-width="1.4"><line x1="131" y1="858.0" x2="1219.8" y2="858.0" stroke-dasharray="8 12"/><line x1="131" y1="941.9" x2="1219.8" y2="941.9" stroke-dasharray="8 12"/><line x1="131" y1="1025.8" x2="1219.8" y2="1025.8" stroke-dasharray="8 12"/><line x1="131" y1="1109.7" x2="1219.8" y2="1109.7" stroke-dasharray="8 12"/><line x1="175.60" y1="866" x2="175.60" y2="1193.5" stroke-dasharray="8 12"/><line x1="221.00" y1="866" x2="221.00" y2="1193.5" stroke-dasharray="8 12"/><line x1="266.40" y1="866" x2="266.40" y2="1193.5" stroke-dasharray="8 12"/><line x1="311.80" y1="866" x2="311.80" y2="1193.5" stroke-dasharray="8 12"/><line x1="357.20" y1="866" x2="357.20" y2="1193.5" stroke-dasharray="8 12"/><line x1="402.60" y1="866" x2="402.60" y2="1193.5" stroke-dasharray="8 12"/><line x1="448.00" y1="866" x2="448.00" y2="1193.5" stroke-dasharray="8 12"/><line x1="493.40" y1="866" x2="493.40" y2="1193.5" stroke-dasharray="8 12"/><line x1="538.80" y1="866" x2="538.80" y2="1193.5" stroke-dasharray="8 12"/><line x1="584.20" y1="866" x2="584.20" y2="1193.5" stroke-dasharray="8 12"/><line x1="629.60" y1="866" x2="629.60" y2="1193.5" stroke-dasharray="8 12"/><line x1="675.00" y1="866" x2="675.00" y2="1193.5" stroke-dasharray="8 12"/><line x1="720.40" y1="866" x2="720.40" y2="1193.5" stroke-dasharray="8 12"/><line x1="765.80" y1="866" x2="765.80" y2="1193.5" stroke-dasharray="8 12"/><line x1="811.20" y1="866" x2="811.20" y2="1193.5" stroke-dasharray="8 12"/><line x1="856.60" y1="866" x2="856.60" y2="1193.5" stroke-dasharray="8 12"/><line x1="902.00" y1="866" x2="902.00" y2="1193.5" stroke-dasharray="8 12"/><line x1="947.40" y1="866" x2="947.40" y2="1193.5" stroke-dasharray="8 12"/><line x1="992.80" y1="866" x2="992.80" y2="1193.5" stroke-dasharray="8 12"/><line x1="1038.20" y1="866" x2="1038.20" y2="1193.5" stroke-dasharray="8 12"/><line x1="1083.60" y1="866" x2="1083.60" y2="1193.5" stroke-dasharray="8 12"/><line x1="1129.00" y1="866" x2="1129.00" y2="1193.5" stroke-dasharray="8 12"/><line x1="1174.40" y1="866" x2="1174.40" y2="1193.5" stroke-dasharray="8 12"/></g><g stroke="#8a8a8a" stroke-width="2"><line x1="120.5" y1="858.0" x2="130" y2="858.0"/><line x1="120.5" y1="941.9" x2="130" y2="941.9"/><line x1="120.5" y1="1025.8" x2="130" y2="1025.8"/><line x1="120.5" y1="1109.7" x2="130" y2="1109.7"/><line x1="120.5" y1="1193.5" x2="130" y2="1193.5"/><line x1="1220" y1="858.0" x2="1229.5" y2="858.0"/><line x1="1220" y1="941.9" x2="1229.5" y2="941.9"/><line x1="1220" y1="1025.8" x2="1229.5" y2="1025.8"/><line x1="1220" y1="1109.7" x2="1229.5" y2="1109.7"/><line x1="1220" y1="1193.5" x2="1229.5" y2="1193.5"/><line x1="1349" y1="858.0" x2="1359" y2="858.0"/><line x1="1349" y1="969.8" x2="1359" y2="969.8"/><line x1="1349" y1="1081.7" x2="1359" y2="1081.7"/><line x1="1349" y1="1193.5" x2="1359" y2="1193.5"/><line x1="130.20" y1="1195" x2="130.20" y2="1204"/><line x1="175.60" y1="1195" x2="175.60" y2="1204"/><line x1="221.00" y1="1195" x2="221.00" y2="1204"/><line x1="266.40" y1="1195" x2="266.40" y2="1204"/><line x1="311.80" y1="1195" x2="311.80" y2="1204"/><line x1="357.20" y1="1195" x2="357.20" y2="1204"/><line x1="402.60" y1="1195" x2="402.60" y2="1204"/><line x1="448.00" y1="1195" x2="448.00" y2="1204"/><line x1="493.40" y1="1195" x2="493.40" y2="1204"/><line x1="538.80" y1="1195" x2="538.80" y2="1204"/><line x1="584.20" y1="1195" x2="584.20" y2="1204"/><line x1="629.60" y1="1195" x2="629.60" y2="1204"/><line x1="675.00" y1="1195" x2="675.00" y2="1204"/><line x1="720.40" y1="1195" x2="720.40" y2="1204"/><line x1="765.80" y1="1195" x2="765.80" y2="1204"/><line x1="811.20" y1="1195" x2="811.20" y2="1204"/><line x1="856.60" y1="1195" x2="856.60" y2="1204"/><line x1="902.00" y1="1195" x2="902.00" y2="1204"/><line x1="947.40" y1="1195" x2="947.40" y2="1204"/><line x1="992.80" y1="1195" x2="992.80" y2="1204"/><line x1="1038.20" y1="1195" x2="1038.20" y2="1204"/><line x1="1083.60" y1="1195" x2="1083.60" y2="1204"/><line x1="1129.00" y1="1195" x2="1129.00" y2="1204"/><line x1="1174.40" y1="1195" x2="1174.40" y2="1204"/><line x1="1219.80" y1="1195" x2="1219.80" y2="1204"/></g>
<polyline points="133.5,964.0 134.1,967.4 138.0,981.7 144.6,993.5 152.4,1007.8 157.6,1015.6 166.7,1026.0 174.6,1034.7 181.1,1037.3 191.5,1049.0 205.9,1056.0 217.6,1065.2 232.0,1071.2 255.4,1080.8 263.3,1081.6 271.1,1086.8 281.5,1091.3 286.7,1089.4 294.6,1092.0 298.5,1096.0 310.2,1097.8 316.7,1101.0 327.2,1101.0 338.9,1105.6 346.8,1105.1 354.6,1106.9 358.5,1121.3 362.4,1112.2 367.6,1109.0 378.1,1113.4 396.3,1114.7 404.2,1117.4 417.2,1117.4 420.0,1116.1 425.6,1120.4 432.5,1119.2 440.6,1120.4 444.9,1122.9 448.1,1122.3 451.8,1124.8 459.9,1125.4 463.0,1127.3 474.9,1126.7 484.8,1128.5 489.8,1127.3 493.6,1128.5 498.6,1131.0 502.3,1131.0 508.5,1126.7 514.8,1127.3 523.5,1135.4 528.5,1132.3 538.5,1136.0 543.4,1134.1 547.2,1135.4 560.9,1134.8 565.3,1138.5 569.6,1137.9 580.8,1141.6 584.6,1139.8 592.1,1142.2 598.3,1138.5 610.8,1138.5 618.3,1142.9 622.0,1139.8 632.0,1142.9 637.0,1141.0 641.3,1144.1 654.4,1144.1 663.1,1140.4 671.2,1144.7 681.8,1142.2 700.5,1141.6 705.5,1144.1 713.0,1146.0 716.8,1147.9 725.1,1146.3 736.5,1147.6 742.9,1109.6 751.7,1109.6 754.3,1089.3 759.3,1075.4 763.1,1047.5 765.7,991.7 766.9,930.9 769.5,911.9 774.5,914.5 798.6,913.2 803.7,911.9 807.5,914.5 811.3,913.2 815.0,917.0 818.8,918.8 841.6,918.8 846.7,914.0 853.0,915.7 859.4,913.2 887.2,913.2 892.3,915.7 901.2,917.0 905.0,913.7 930.3,913.7 937.9,914.5 944.2,920.8 950.6,924.6 953.1,936.0 955.6,966.4 959.4,981.6 965.1,996.8 977.8,1015.8 985.4,1023.4 996.8,1041.1 1008.2,1051.3 1022.1,1062.7 1034.8,1069.0 1050.0,1076.6 1056.3,1083.0 1069.0,1083.0 1076.6,1089.3 1095.6,1094.4 1112.0,1100.7 1127.2,1104.5 1137.4,1103.2 1147.5,1103.2 1152.6,1088.0 1157.6,1042.4 1161.4,986.7 1165.2,920.8 1170.3,917.0 1174.1,919.5 1181.7,914.5 1191.8,915.7 1195.6,919.5 1204.5,934.7" fill="none" stroke="#eded1c" stroke-width="3.6" stroke-linejoin="round" stroke-linecap="round"/>
<polyline points="673.1,1191.5 686.0,1189.5 701.8,1189.0 706.8,1168.0 710.5,1162.0 715.0,1161.5 728.9,1129.8 735.3,1128.6 742.9,1062.7 750.5,1062.7 754.3,1072.8 759.3,1065.2 765.7,989.2 769.5,982.9 773.3,989.2 777.1,979.1 796.1,979.1 799.9,994.3 803.7,970.2 810.7,1004.4 818.8,906.9 841.6,906.9 845.4,938.5 849.2,956.3 855.6,1003.1 887.2,1003.1 891.0,998.1 898.6,998.1 906.2,955.0 927.8,955.0 932.8,926.4 936.6,928.4 946.8,1047.5 951.8,1050.0 955.6,1062.7 958.8,1060.2 965.1,1091.8 970.2,1088.0 977.8,1065.2 985.4,1058.9 989.2,1042.4 1000.6,1072.8 1008.2,1069.0 1015.8,1074.1 1022.1,1055.1 1029.7,1034.8 1041.1,1089.3 1050.0,1053.8 1053.8,1056.3 1063.9,1089.3 1075.3,1117.2 1086.7,1089.3 1093.0,1103.2 1099.4,1114.6 1109.5,1128.6 1114.6,1127.3 1124.7,1075.4 1136.1,1070.3 1141.2,1071.6 1147.5,1091.8 1153.8,1057.6 1157.6,1057.6 1162.7,1099.4 1167.8,1103.2 1174.1,1122.2 1180.4,1118.4 1185.5,1128.6 1204.5,1165.3" fill="none" stroke="#e83ca8" stroke-width="3.6" stroke-linejoin="round" stroke-linecap="round"/>
<polyline points="132.8,1183.9 140.0,1188.0 148.5,1190.4 150.0,1193.5 673.1,1193.5 684.3,1187.1 701.8,1185.3 706.8,1164.7 710.5,1159.7 715.0,1153.9 722.6,1138.7 728.9,1124.8 732.7,1122.2 736.5,1121.0 741.6,1050.0 750.5,1050.0 754.3,1060.2 759.3,1052.6 763.1,971.5 768.2,960.1 773.3,966.4 777.1,955.0 796.1,955.0 799.9,971.5 803.7,944.9 810.0,982.9 817.6,875.2 841.6,875.2 849.2,923.3 855.6,981.6 859.4,982.9 884.7,982.9 889.8,977.8 897.4,976.5 906.2,928.4 911.3,926.4 927.8,926.4 932.3,896.7 936.6,899.3 946.8,1032.3 951.8,1034.8 955.6,1047.5 958.8,1045.0 965.1,1080.4 970.2,1076.6 976.5,1052.6 984.1,1043.7 989.2,1026.0 1000.6,1058.9 1008.2,1055.1 1015.8,1061.4 1022.1,1039.9 1029.7,1017.1 1041.1,1077.9 1050.0,1037.4 1053.8,1039.9 1063.9,1077.9 1075.3,1108.3 1086.7,1077.9 1091.8,1081.7 1096.8,1104.5 1103.2,1113.4 1109.5,1121.0 1114.6,1118.4 1124.7,1062.7 1129.8,1061.4 1136.1,1057.6 1141.2,1057.6 1147.5,1083.0 1151.3,1043.7 1156.4,1042.4 1162.7,1089.3 1167.8,1095.6 1174.1,1113.4 1181.7,1109.6 1185.5,1123.5 1204.5,1161.5" fill="none" stroke="#5f14ec" stroke-width="3.6" stroke-linejoin="round" stroke-linecap="round"/>
<rect x="128" y="858" width="5" height="338" fill="#fff"/>
<rect x="128" y="1191" width="1094" height="5" fill="#fff"/>
<rect x="1217" y="858" width="5" height="338" fill="#fff"/>
<rect x="1346.7" y="858" width="5" height="336" fill="#fff"/>
<text x="52.79" y="882.90" font-size="26.80" textLength="56.74" lengthAdjust="spacingAndGlyphs" fill="#8c8c8c" style="" >2.8&#160;V</text>
<text x="39.08" y="950.90" font-size="26.80" textLength="70.47" lengthAdjust="spacingAndGlyphs" fill="#8c8c8c" style="" >2.75&#160;V</text>
<text x="52.99" y="1034.50" font-size="26.80" textLength="56.33" lengthAdjust="spacingAndGlyphs" fill="#8c8c8c" style="" >2.7&#160;V</text>
<text x="39.19" y="1118.70" font-size="26.80" textLength="70.16" lengthAdjust="spacingAndGlyphs" fill="#8c8c8c" style="" >2.65&#160;V</text>
<text x="52.99" y="1187.90" font-size="26.80" textLength="56.33" lengthAdjust="spacingAndGlyphs" fill="#8c8c8c" style="" >2.6&#160;V</text>
<text x="1239.91" y="881.90" font-size="26.80" textLength="101.74" lengthAdjust="spacingAndGlyphs" fill="#8c8c8c" style="" >40000&#160;Lx</text>
<text x="1239.41" y="950.40" font-size="26.80" textLength="102.24" lengthAdjust="spacingAndGlyphs" fill="#8c8c8c" style="" >30000&#160;Lx</text>
<text x="1239.15" y="1034.50" font-size="26.80" textLength="102.49" lengthAdjust="spacingAndGlyphs" fill="#8c8c8c" style="" >20000&#160;Lx</text>
<text x="1238.52" y="1118.00" font-size="26.80" textLength="103.13" lengthAdjust="spacingAndGlyphs" fill="#8c8c8c" style="" >10000&#160;Lx</text>
<text x="1239.42" y="1187.20" font-size="26.80" textLength="46.12" lengthAdjust="spacingAndGlyphs" fill="#8c8c8c" style="" >0&#160;Lx</text>
<text x="1368.06" y="881.90" font-size="26.80" textLength="113.04" lengthAdjust="spacingAndGlyphs" fill="#8c8c8c" style="" >300&#160;W/m²</text>
<text x="1367.79" y="979.20" font-size="26.80" textLength="113.31" lengthAdjust="spacingAndGlyphs" fill="#8c8c8c" style="" >200&#160;W/m²</text>
<text x="1367.13" y="1089.90" font-size="26.80" textLength="113.97" lengthAdjust="spacingAndGlyphs" fill="#8c8c8c" style="" >100&#160;W/m²</text>
<text x="1368.06" y="1187.20" font-size="26.80" textLength="83.77" lengthAdjust="spacingAndGlyphs" fill="#8c8c8c" style="" >0&#160;W/m²</text>
<text x="206.27" y="1245.50" font-size="26.80" textLength="29.63" lengthAdjust="spacingAndGlyphs" fill="#8c8c8c" style="" >20</text>
<text x="432.98" y="1245.50" font-size="26.80" textLength="28.43" lengthAdjust="spacingAndGlyphs" fill="#8c8c8c" style="" >01</text>
<text x="660.35" y="1245.50" font-size="26.80" textLength="29.16" lengthAdjust="spacingAndGlyphs" fill="#8c8c8c" style="" >06</text>
<text x="887.70" y="1245.50" font-size="26.80" textLength="24.96" lengthAdjust="spacingAndGlyphs" fill="#8c8c8c" style="" >11</text>
<text x="1113.46" y="1245.50" font-size="26.80" textLength="30.18" lengthAdjust="spacingAndGlyphs" fill="#8c8c8c" style="" >16</text>
<defs><linearGradient id="gw" x1="0" x2="1" y1="0" y2="0"><stop offset="0" stop-color="#b9b9be"/><stop offset="0.12" stop-color="#d6d6da"/><stop offset="0.5" stop-color="#e0e0e4"/><stop offset="0.88" stop-color="#d8d8dc"/><stop offset="1" stop-color="#b4b4b8"/></linearGradient><linearGradient id="gw2" x1="0" x2="1" y1="0" y2="0"><stop offset="0" stop-color="#c4c4c8"/><stop offset="0.5" stop-color="#d4d4d8"/><stop offset="1" stop-color="#bcbcc0"/></linearGradient><linearGradient id="gh" x1="0" x2="1" y1="0" y2="0"><stop offset="0" stop-color="#c0c0c4"/><stop offset="0.15" stop-color="#dedee2"/><stop offset="0.85" stop-color="#d8d8dc"/><stop offset="1" stop-color="#b8b8bc"/></linearGradient></defs><rect x="1569.7" y="905" width="19.7" height="21" fill="#8e8e92"/><path d="M1511.3,878 C1515,866 1545,860.7 1579,860.7 C1613,860.7 1643,866 1646.6,878 L1645,904 C1635,908 1610,910.8 1579,910.8 C1548,910.8 1522,908 1513.7,905 Z" fill="url(#gw)"/><path d="M1513,879 C1540,875 1620,875 1645,882" fill="none" stroke="#8a8a90" stroke-width="1.2"/><path d="M1546,903 h9 M1558,908 h10 M1604,905 h10 M1595,910 h10" stroke="#a8a8ac" stroke-width="1.5"/><rect x="1534" y="950" width="91" height="45" fill="#8c8c90"/><path d="M1525,966.5 L1529,955 L1629.5,955 L1633.5,966.5 Q1579.25,969.0 1525,966.5 Z" fill="url(#gw2)"/><path d="M1528.6,978.5 L1532.6,969.5 L1627.1,969.5 L1631.1,978.5 Q1579.85,981.0 1528.6,978.5 Z" fill="url(#gw2)"/><path d="M1531.6,990 L1535.6,981.5 L1624.2,981.5 L1628.2,990 Q1579.9,992.5 1531.6,990 Z" fill="url(#gw2)"/><path d="M1514.3,931 C1540,925.5 1620,925.5 1643.6,931 L1635.9,953 C1610,957 1548,957 1522,953 Z" fill="url(#gw)"/><path d="M1534,991 L1625.2,991 C1623,1040 1621.5,1090 1620.6,1112 C1620,1135 1617,1150 1615,1160 L1546,1160 C1542,1150 1540,1135 1539.6,1112 C1538.5,1090 1536,1040 1534,991 Z" fill="url(#gw)"/><line x1="1540" y1="1123.8" x2="1620" y2="1123.8" stroke="#a8a8ac" stroke-width="1"/><rect x="1544.2" y="1026" width="27" height="83" rx="5" fill="#121214"/><path d="M1625,944 l3.5,-10 l0.8,10 z" fill="#2b50b8"/><path d="M1609.5,1105 q2,-7 6,-9 l-1.5,8 z" fill="#2b50b8"/><path d="M1540.5,1159.2 L1619.6,1159.2 L1611.3,1233 Q1610,1237.4 1600,1237.4 L1562,1237.4 Q1552.5,1237.4 1551.7,1233 Z" fill="#c2c2c6"/><path d="M1545,1161 L1553,1161 L1559,1236 L1553,1236 Z" fill="#d6d6da"/><path d="M1574,1161 L1581,1161 L1584,1236 L1576,1236 Z" fill="#d6d6da"/><path d="M1603,1161 L1611,1161 L1606,1236 L1600,1236 Z" fill="#d6d6da"/><path d="M1701.5,1086 C1715,1077 1745,1077 1758.5,1086 L1761.2,1227 C1740,1231 1718,1234 1698.6,1235 Z" fill="url(#gh)"/><path d="M1758,1100 C1720,1110 1716,1210 1757,1222" fill="none" stroke="#a0a0a4" stroke-width="1"/><path d="M1707,1192 l8,-3 M1706,1199 l9,-3" stroke="#b0b0b4" stroke-width="1"/>
<rect x="1840" y="4" width="566" height="1338" fill="#fff"/>
<rect x="1850" y="4" width="554" height="72" fill="#d6d6d6"/>
<rect x="1850" y="76" width="554" height="2" fill="#001433"/>
<rect x="1850" y="78" width="554" height="52" fill="#e0e0e0"/>
<rect x="1850" y="130" width="554" height="2" fill="#001433"/>
<rect x="1850" y="132" width="554" height="36" fill="#e0e0e0"/>
<rect x="1850" y="168" width="554" height="2" fill="#001433"/>
<rect x="1850" y="170" width="275" height="44" fill="#f2f2f2"/>
<rect x="2125" y="170" width="4" height="44" fill="#5b7089"/>
<rect x="1850" y="214" width="554" height="2" fill="#001433"/>
<rect x="1850" y="216" width="275" height="44" fill="#f2f2f2"/>
<rect x="2125" y="216" width="4" height="44" fill="#5b7089"/>
<rect x="1850" y="260" width="554" height="2" fill="#001433"/>
<rect x="1850" y="262" width="275" height="44" fill="#f2f2f2"/>
<rect x="2125" y="262" width="4" height="44" fill="#5b7089"/>
<rect x="1850" y="306" width="554" height="2" fill="#001433"/>
<rect x="1850" y="308" width="275" height="44" fill="#f2f2f2"/>
<rect x="2125" y="308" width="4" height="44" fill="#5b7089"/>
<rect x="1850" y="352" width="554" height="2" fill="#001433"/>
<rect x="1850" y="354" width="554" height="36" fill="#e0e0e0"/>
<rect x="1850" y="390" width="554" height="2" fill="#001433"/>
<rect x="1850" y="392" width="275" height="44" fill="#f2f2f2"/>
<rect x="2125" y="392" width="4" height="44" fill="#5b7089"/>
<rect x="1850" y="436" width="554" height="2" fill="#001433"/>
<rect x="1850" y="438" width="554" height="36" fill="#e0e0e0"/>
<rect x="1850" y="474" width="554" height="2" fill="#001433"/>
<rect x="1850" y="476" width="275" height="44" fill="#f2f2f2"/>
<rect x="2125" y="476" width="4" height="44" fill="#5b7089"/>
<rect x="1850" y="520" width="554" height="2" fill="#001433"/>
<rect x="1850" y="522" width="275" height="44" fill="#f2f2f2"/>
<rect x="2125" y="522" width="4" height="44" fill="#5b7089"/>
<rect x="1850" y="566" width="554" height="2" fill="#001433"/>
<rect x="1850" y="568" width="554" height="36" fill="#e0e0e0"/>
<rect x="1850" y="604" width="554" height="2" fill="#001433"/>
<rect x="1850" y="606" width="275" height="66" fill="#f2f2f2"/>
<rect x="2125" y="606" width="4" height="66" fill="#5b7089"/>
<rect x="1850" y="672" width="554" height="2" fill="#001433"/>
<rect x="1850" y="674" width="275" height="44" fill="#f2f2f2"/>
<rect x="2125" y="674" width="4" height="44" fill="#5b7089"/>
<rect x="1850" y="718" width="554" height="2" fill="#001433"/>
<rect x="1850" y="720" width="275" height="44" fill="#f2f2f2"/>
<rect x="2125" y="720" width="4" height="44" fill="#5b7089"/>
<rect x="1850" y="764" width="554" height="2" fill="#001433"/>
<rect x="1850" y="766" width="554" height="36" fill="#e0e0e0"/>
<rect x="1850" y="802" width="554" height="2" fill="#001433"/>
<rect x="1850" y="804" width="275" height="44" fill="#f2f2f2"/>
<rect x="2125" y="804" width="4" height="44" fill="#5b7089"/>
<rect x="1850" y="848" width="554" height="2" fill="#001433"/>
<rect x="1850" y="850" width="554" height="36" fill="#e0e0e0"/>
<rect x="1850" y="886" width="554" height="2" fill="#001433"/>
<rect x="1850" y="888" width="275" height="44" fill="#f2f2f2"/>
<rect x="2125" y="888" width="4" height="44" fill="#5b7089"/>
<rect x="1850" y="932" width="554" height="2" fill="#001433"/>
<rect x="1850" y="934" width="275" height="44" fill="#f2f2f2"/>
<rect x="2125" y="934" width="4" height="44" fill="#5b7089"/>
<rect x="1850" y="978" width="554" height="2" fill="#001433"/>
<rect x="1850" y="980" width="275" height="44" fill="#f2f2f2"/>
<rect x="2125" y="980" width="4" height="44" fill="#5b7089"/>
<rect x="1850" y="1024" width="554" height="2" fill="#001433"/>
<rect x="1850" y="1026" width="554" height="36" fill="#e0e0e0"/>
<rect x="1850" y="1062" width="554" height="2" fill="#001433"/>
<rect x="1850" y="1064" width="275" height="44" fill="#f2f2f2"/>
<rect x="2125" y="1064" width="4" height="44" fill="#5b7089"/>
<rect x="1850" y="1108" width="554" height="4" fill="#001433"/>
<text x="1859.57" y="51.00" font-size="33.00" textLength="74.43" lengthAdjust="spacingAndGlyphs" fill="#0a2244" style="font-weight:bold;" >Seite</text>
<circle cx="2326" cy="39.7" r="16.7" fill="#8a8a8a"/>
<path d="M2319.5,34.5 C2319.5,30.5 2322.5,28.2 2326,28.2 C2329.8,28.2 2332.7,30.7 2332.7,34.2 C2332.7,38.5 2328.2,39.2 2328.2,43.5 L2324,43.5 C2324,37.8 2328.5,37.2 2328.5,34.3 C2328.5,32.9 2327.5,31.9 2326,31.9 C2324.5,31.9 2323.5,33 2323.5,34.5 Z M2324,46.2 h4.2 v3.9 h-4.2 z" fill="#dcdcdc"/>
<rect x="2364.5" y="26.5" width="27" height="27" rx="3.5" fill="none" stroke="#0a2244" stroke-width="3"/>
<path d="M2373,32 h9.8 v2.8 h-7 v3.9 h7 v2.7 h-7 v4.3 h7 v2.7 h-9.8 z" fill="#0a2244"/>
<path d="M1898.5,104 H1871.5 M1884,90.5 L1870.5,104 L1884,117.5" fill="none" stroke="#1c1c1c" stroke-width="3.2" stroke-linecap="butt"/>
<text x="1917.26" y="114.00" font-size="28.40" textLength="85.37" lengthAdjust="spacingAndGlyphs" fill="#0a2244" style="" >Zurück</text>
<defs><clipPath id="lc"><rect x="1850" y="0" width="268" height="1342"/></clipPath><linearGradient id="fade" x1="0" x2="1"><stop offset="0" stop-color="#f2f2f2" stop-opacity="0"/><stop offset="1" stop-color="#f2f2f2"/></linearGradient></defs>
<text x="1859.11" y="160.10" font-size="28.50" textLength="89.47" lengthAdjust="spacingAndGlyphs" fill="#0a2244" style="" >Gesten</text>
<text x="1873.91" y="201.20" font-size="27.80" textLength="230.95" lengthAdjust="spacingAndGlyphs" fill="#0a2244" style="" >Geste&#160;Runter&#160;Aktion</text>
<text x="2137.32" y="201.20" font-size="27.80" textLength="66.42" lengthAdjust="spacingAndGlyphs" fill="#333" style="" >Keine</text>
<text x="1873.90" y="246.80" font-size="27.80" textLength="216.38" lengthAdjust="spacingAndGlyphs" fill="#0a2244" style="" >Geste&#160;Linke&#160;Aktion</text>
<text x="2137.32" y="246.80" font-size="27.80" textLength="66.42" lengthAdjust="spacingAndGlyphs" fill="#333" style="" >Keine</text>
<text x="1873.91" y="292.90" font-size="27.80" textLength="234.48" lengthAdjust="spacingAndGlyphs" fill="#0a2244" style="" >Geste&#160;Rechts&#160;Aktion</text>
<text x="2137.32" y="292.90" font-size="27.80" textLength="66.42" lengthAdjust="spacingAndGlyphs" fill="#333" style="" >Keine</text>
<text x="1873.89" y="338.50" font-size="27.80" textLength="231.91" lengthAdjust="spacingAndGlyphs" fill="#0a2244" style="" >Geste&#160;Hinauf&#160;Aktion</text>
<text x="2137.32" y="338.50" font-size="27.80" textLength="66.42" lengthAdjust="spacingAndGlyphs" fill="#333" style="" >Keine</text>
<text x="1859.10" y="381.60" font-size="28.50" textLength="52.79" lengthAdjust="spacingAndGlyphs" fill="#0a2244" style="" >Grid</text>
<text x="1873.90" y="421.80" font-size="27.80" textLength="145.79" lengthAdjust="spacingAndGlyphs" fill="#0a2244" style="" >Grid&#160;aktiviert</text>
<text x="1859.14" y="464.70" font-size="28.50" textLength="77.06" lengthAdjust="spacingAndGlyphs" fill="#0a2244" style="" >Größe</text>
<text x="1874.04" y="506.30" font-size="27.80" textLength="139.99" lengthAdjust="spacingAndGlyphs" fill="#0a2244" style="" >Seitengröße</text>
<text x="2138.47" y="506.30" font-size="27.80" textLength="97.29" lengthAdjust="spacingAndGlyphs" fill="#0a2244" style="font-weight:bold;" >983;702</text>
<text x="1874.04" y="551.90" font-size="27.80" textLength="296.97" lengthAdjust="spacingAndGlyphs" fill="#0a2244" style="" clip-path="url(#lc)">Option&#160;Größenanpassung</text>
<text x="2138.80" y="551.90" font-size="27.80" textLength="196.14" lengthAdjust="spacingAndGlyphs" fill="#0a2244" style="font-weight:bold;" >An&#160;Client&#160;anpass</text>
<text x="1858.21" y="594.80" font-size="28.50" textLength="149.76" lengthAdjust="spacingAndGlyphs" fill="#0a2244" style="" >Hintergrund</text>
<text x="1873.07" y="647.10" font-size="27.80" textLength="180.21" lengthAdjust="spacingAndGlyphs" fill="#0a2244" style="" >Hintergrundbild</text>
<text x="1875.20" y="705.50" font-size="27.80" textLength="268.29" lengthAdjust="spacingAndGlyphs" fill="#0a2244" style="" clip-path="url(#lc)">Anordnung&#160;Hintergrund</text>
<text x="2138.64" y="705.50" font-size="27.80" textLength="102.44" lengthAdjust="spacingAndGlyphs" fill="#0a2244" style="font-weight:bold;" >Zentriert</text>
<text x="1874.03" y="751.10" font-size="27.80" textLength="133.24" lengthAdjust="spacingAndGlyphs" fill="#0a2244" style="" >Seitenfarbe</text>
<text x="1858.20" y="794.00" font-size="28.50" textLength="82.99" lengthAdjust="spacingAndGlyphs" fill="#0a2244" style="" >Popup</text>
<text x="1873.14" y="835.00" font-size="27.80" textLength="282.62" lengthAdjust="spacingAndGlyphs" fill="#0a2244" style="" clip-path="url(#lc)">Popup&#160;autom.&#160;Schließen</text>
<text x="1859.25" y="878.00" font-size="28.50" textLength="63.39" lengthAdjust="spacingAndGlyphs" fill="#0a2244" style="" >Seite</text>
<text x="1874.04" y="918.20" font-size="27.80" textLength="137.37" lengthAdjust="spacingAndGlyphs" fill="#0a2244" style="" >Seitenname</text>
<text x="2139.27" y="918.20" font-size="27.80" textLength="156.25" lengthAdjust="spacingAndGlyphs" fill="#888" style="" >Wetterstation</text>
<text x="1874.01" y="964.30" font-size="27.80" textLength="116.46" lengthAdjust="spacingAndGlyphs" fill="#0a2244" style="" >Seitentitel</text>
<text x="2139.40" y="964.30" font-size="27.80" textLength="158.53" lengthAdjust="spacingAndGlyphs" fill="#0a2244" style="font-weight:bold;" >Wetterstation</text>
<text x="1874.04" y="1009.40" font-size="27.80" textLength="121.74" lengthAdjust="spacingAndGlyphs" fill="#0a2244" style="" >Seitentype</text>
<text x="2137.29" y="1009.40" font-size="27.80" textLength="76.21" lengthAdjust="spacingAndGlyphs" fill="#888" style="" >Popup</text>
<text x="1860.36" y="1053.30" font-size="28.50" textLength="177.75" lengthAdjust="spacingAndGlyphs" fill="#0a2244" style="" >View&#160;Kopieren</text>
<text x="1874.02" y="1094.20" font-size="27.80" textLength="211.91" lengthAdjust="spacingAndGlyphs" fill="#0a2244" style="" >Seite&#160;ist&#160;geschützt</text>
<rect x="2096" y="522" width="24" height="44" fill="url(#fade)"/>
<rect x="2096" y="674" width="24" height="44" fill="url(#fade)"/>
<rect x="2096" y="804" width="24" height="44" fill="url(#fade)"/>
<circle cx="2356" cy="192" r="2.7" fill="#0a2244"/><circle cx="2364" cy="192" r="2.7" fill="#0a2244"/><circle cx="2372" cy="192" r="2.7" fill="#0a2244"/>
<circle cx="2356" cy="238" r="2.7" fill="#0a2244"/><circle cx="2364" cy="238" r="2.7" fill="#0a2244"/><circle cx="2372" cy="238" r="2.7" fill="#0a2244"/>
<circle cx="2356" cy="284" r="2.7" fill="#0a2244"/><circle cx="2364" cy="284" r="2.7" fill="#0a2244"/><circle cx="2372" cy="284" r="2.7" fill="#0a2244"/>
<circle cx="2356" cy="330" r="2.7" fill="#0a2244"/><circle cx="2364" cy="330" r="2.7" fill="#0a2244"/><circle cx="2372" cy="330" r="2.7" fill="#0a2244"/>
<circle cx="2356" cy="498" r="2.7" fill="#0a2244"/><circle cx="2364" cy="498" r="2.7" fill="#0a2244"/><circle cx="2372" cy="498" r="2.7" fill="#0a2244"/>
<circle cx="2356" cy="544" r="2.7" fill="#0a2244"/><circle cx="2364" cy="544" r="2.7" fill="#0a2244"/><circle cx="2372" cy="544" r="2.7" fill="#0a2244"/>
<circle cx="2356" cy="696" r="2.7" fill="#0a2244"/><circle cx="2364" cy="696" r="2.7" fill="#0a2244"/><circle cx="2372" cy="696" r="2.7" fill="#0a2244"/>
<rect x="2249.5" y="398" width="33" height="33" rx="3" fill="#fff" stroke="#333" stroke-width="3.2"/>
<rect x="2249.5" y="810" width="33" height="33" rx="3" fill="#fff" stroke="#333" stroke-width="3.2"/>
<rect x="2249.5" y="1070" width="33" height="33" rx="3" fill="#fff" stroke="#333" stroke-width="3.2"/>
<rect x="2265.2" y="723.9" width="37.8" height="36.6" rx="8" fill="#fff" stroke="#0a2244" stroke-width="2.6"/>
<circle cx="2276" cy="742" r="2.7" fill="#0a2244"/><circle cx="2284" cy="742" r="2.7" fill="#0a2244"/><circle cx="2292" cy="742" r="2.7" fill="#0a2244"/>
<rect x="2315" y="741" width="18" height="2.4" fill="#aaa"/>
<rect x="2345.6" y="723.9" width="37.8" height="36.6" rx="8" fill="#fff" stroke="#0a2244" stroke-width="2.6"/>
<circle cx="2356.5" cy="742" r="2.7" fill="#999"/><circle cx="2364.5" cy="742" r="2.7" fill="#999"/><circle cx="2372.5" cy="742" r="2.7" fill="#999"/>
<g fill="none" stroke="#0a2244" stroke-width="2.4"><circle cx="2240.5" cy="635.5" r="7.2"/><line x1="2245.8" y1="640.8" x2="2254" y2="649"/></g>
<rect x="2273.5" y="628.5" width="5.2" height="5.2" fill="#0a2244"/><rect x="2273.5" y="636.5" width="5.2" height="5.2" fill="#0a2244"/><rect x="2273.5" y="644.5" width="5.2" height="5.2" fill="#0a2244"/><rect x="2281.5" y="628.5" width="5.2" height="5.2" fill="#0a2244"/><rect x="2281.5" y="636.5" width="5.2" height="5.2" fill="#0a2244"/><rect x="2281.5" y="644.5" width="5.2" height="5.2" fill="#0a2244"/><rect x="2289.5" y="628.5" width="5.2" height="5.2" fill="#0a2244"/><rect x="2289.5" y="636.5" width="5.2" height="5.2" fill="#0a2244"/><rect x="2289.5" y="644.5" width="5.2" height="5.2" fill="#0a2244"/>
<path d="M2312,632.5 v14.5 a1.5,1.5 0 0 0 1.5,1.5 h21.5 a1.5,1.5 0 0 0 1.5,-1.5 v-12.5 a1.5,1.5 0 0 0 -1.5,-1.5 h-12.5" fill="none" stroke="#0a2244" stroke-width="2.4"/>
<path d="M2310.8,634 v-4.3 a1.5,1.5 0 0 1 1.5,-1.5 h8.2 l3.2,3.4 v2.4 z" fill="#0a2244"/>
<path d="M2355.5,630 L2372.5,647 M2372.5,630 L2355.5,647" stroke="#0a2244" stroke-width="2.6"/>
</svg>
</body></html>
